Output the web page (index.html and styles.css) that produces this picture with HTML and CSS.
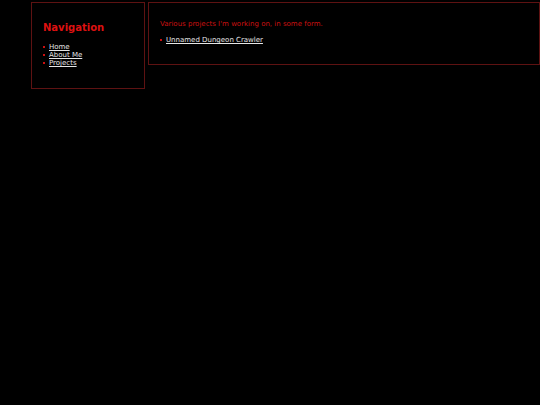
FILE: index.html
```html
<!DOCTYPE html>
<html>
<head>
<meta charset="utf-8">
<link rel="stylesheet" href="styles.css">
</head>
<body>
<div class="page">
  <div class="nav">
    <h2 class="nav-title">Navigation</h2>
    <ul class="list">
      <li><a href="#">Home</a></li>
      <li><a href="#">About Me</a></li>
      <li><a href="#">Projects</a></li>
    </ul>
  </div>
  <div class="content">
    <p class="intro">Various projects I'm working on, in some form.</p>
    <ul class="list">
      <li><a href="#">Unnamed Dungeon Crawler</a></li>
    </ul>
  </div>
</div>
</body>
</html>
```
FILE: styles.css
```css
html, body {
  margin: 0;
  padding: 0;
  background: #000;
}
body {
  font-family: "DejaVu Sans", Verdana, sans-serif;
  color: #cc1111;
  font-size: 7px;
}
.page {
  display: flex;
  align-items: flex-start;
  gap: 3px;
  padding: 2px 0 0 31px;
}
.nav {
  width: 112px;
  height: 85px;
  border: 1px solid #5e1212;
  padding: 0 0 0 11px;
  box-sizing: border-box;
  width: 114px;
  height: 87px;
}
.nav-title {
  margin: 19px 0 0 0;
  font-size: 10px;
  line-height: 12px;
  font-weight: bold;
  color: #dd1111;
}
.list {
  margin: 9px 0 0 0;
  padding: 0;
  list-style: none;
}
.list li {
  position: relative;
  padding-left: 6px;
  line-height: 8px;
  height: 8px;
}
.list li::before {
  content: "";
  position: absolute;
  left: 0;
  top: 3px;
  width: 2px;
  height: 2px;
  background: #cc1111;
}
.list a {
  color: #e6e6e6;
  text-decoration: underline;
}
.content {
  flex: 1;
  height: 63px;
  box-sizing: border-box;
  border: 1px solid #5e1212;
  padding: 0 0 0 11px;
}
.intro {
  margin: 17px 0 0 0;
  line-height: 8px;
}
.content .list {
  margin-top: 8px;
}
```
